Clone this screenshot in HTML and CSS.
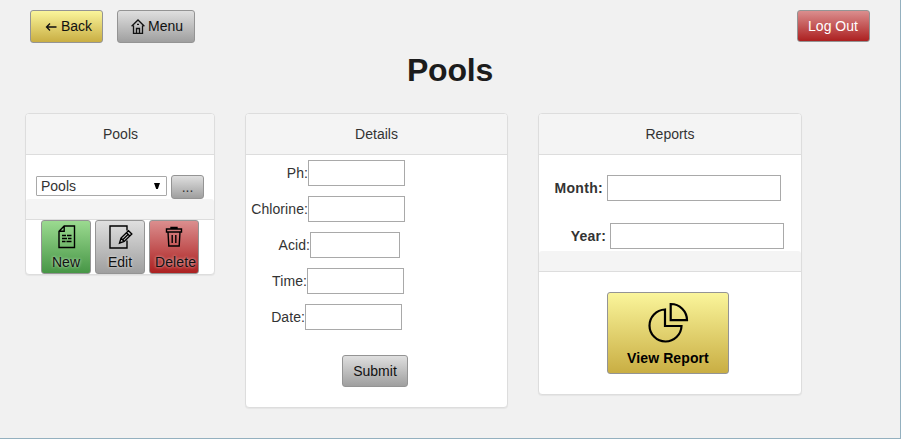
FILE: index.html
```html
<!DOCTYPE html>
<html lang="en">
<head>
<meta charset="utf-8">
<title>Pools</title>
<link rel="stylesheet" href="styles.css">
</head>
<body>
<div class="page">
  <nav class="topbar">
    <button class="btn yellow back"><svg width="12" height="10" viewBox="0 0 12 10"><path d="M11.5 5H1.5M5 1.500L1.500 5L5 8.500"/></svg>Back</button>
    <button class="btn gray menu"><svg width="14" height="15" viewBox="0 0 14 15"><path d="M.6 7.300L7 1l6.400 6.300M2.500 6.500v7.900h9V6.500M5.500 14V9.500h3V14M6 5.300h2"/></svg>Menu</button>
    <button class="btn red logout">Log Out</button>
  </nav>
  <h1>Pools</h1>
  <main class="panels">
    <section class="panel pools">
      <h2>Pools</h2>
      <div class="picker">
        <div class="select"><span>Pools</span><svg width="6" height="6" viewBox="0 0 6 6"><path d="M0 0h6L3.800 6H2.200z"/></svg></div>
        <button class="btn gray more">...</button>
      </div>
      <div class="divider"></div>
      <div class="actions">
        <button class="btn green tile"><svg class="shift" width="20" height="24" viewBox="0 0 20 24"><path d="M7.200 1H17.500v21.500H2V6.200zM7.200 1v5.200H2M5 10.500h4m1 0h4.500M5 13.500h5m1 0h3.500M5 16.500h3.500m1 0h5"/></svg>New</button>
        <button class="btn gray tile"><svg class="shift" width="24" height="24" viewBox="0 0 24 24"><path d="M18 5.500V1H1v22h17V15.500M10.500 18.200l1.500-5.200L19.500 5.800l3.300 3.300-7.600 7.300zM12 13l3.200 3.400M17.500 7.800l3.300 3.300M14 14.500l5-5"/></svg>Edit</button>
        <button class="btn red tile"><svg width="18" height="24" viewBox="0 0 18 24"><path d="M1.500 4h15v3h-15zM6 4V2.500h6V4M3 7l.8 14h10.400L15 7M7.200 10v8M10.800 10v8"/></svg><span class="wide">Delete</span></button>
      </div>
    </section>
    <section class="panel details">
      <h2>Details</h2>
      <form>
        <div class="field ph"><label for="ph">Ph:</label><input id="ph"></div>
        <div class="field chlorine"><label for="chlorine">Chlorine:</label><input id="chlorine"></div>
        <div class="field acid"><label for="acid">Acid:</label><input id="acid"></div>
        <div class="field time"><label for="time">Time:</label><input id="time"></div>
        <div class="field date"><label for="date">Date:</label><input id="date"></div>
        <button type="button" class="btn gray submit">Submit</button>
      </form>
    </section>
    <section class="panel reports">
      <h2>Reports</h2>
      <div class="field month"><label for="month">Month:</label><input id="month"></div>
      <div class="field year"><label for="year">Year:</label><input id="year"></div>
      <div class="divider"></div>
      <button class="btn yellow view"><svg width="42" height="42" viewBox="0 0 42 42"><path d="M18 7.500A16 16 0 1 0 34.500 24H18zM23.700 2v16.200H40A16.200 16.200 0 0 0 23.700 2z"/></svg>View Report</button>
    </section>
  </main>
</div>
</body>
</html>
```

FILE: styles.css
```css
* { box-sizing: border-box; }
body {
  margin: 0;
  font: 14px/20px "Liberation Sans", Arial, sans-serif;
  color: #333;
}
.page {
  width: 901px;
  height: 439px;
  background: #f1f1f1;
  border: solid #94b0bf;
  border-width: 0 1px 1px 0;
  overflow: hidden;
}
.topbar { display: flex; align-items: flex-start; padding: 10px 30px 0; height: 43px; }
.btn {
  display: flex;
  align-items: center;
  justify-content: center;
  flex: none;
  margin: 0;
  padding: 0;
  border: 1px solid #949494;
  border-radius: 3px;
  font: inherit;
  color: #111;
}
svg { flex: none; fill: none; stroke: #111; stroke-width: 1.3; }
.yellow { background: linear-gradient(#faf59b, #c9ae43); }
.gray { background: linear-gradient(#dfdfdf, #9f9f9f); }
.red { background: linear-gradient(#db8e8e, #ac2020); }
.green { background: linear-gradient(#9bda90, #479646); }
.back { width: 73px; height: 33px; gap: 4px; padding: 0 0 1px 4px; }
.back svg { margin-top: 2px; }
.menu { width: 78px; height: 33px; gap: 3px; margin-left: 14px; padding: 0 0 1px 2px; }
.menu svg { margin-top: 1px; }
.logout { width: 73px; height: 32px; margin-left: auto; padding-right: 1px; color: #fff; }
h1 {
  margin: 7px 0 23px;
  text-align: center;
  font-size: 32px;
  line-height: 40px;
  letter-spacing: -.2px;
  color: #1c1c1c;
}
.panels { display: flex; align-items: flex-start; gap: 30px; padding-left: 25px; }
.panel {
  border: 1px solid #ddd;
  border-radius: 4px;
  background: #fff;
  box-shadow: 0 1px 1px rgba(0, 0, 0, .05);
}
.panel h2 {
  margin: 0;
  height: 41px;
  border-bottom: 1px solid #ddd;
  border-radius: 3px 3px 0 0;
  background: #f4f4f4;
  font-size: 14px;
  line-height: 40px;
  font-weight: normal;
  text-align: center;
}
.pools h2 { padding-left: 1px; }
.divider { height: 21px; border-bottom: 1px solid #ddd; border-radius: 3px 3px 0 0; background: #f4f4f4; }
.pools { width: 190px; height: 162px; }
.picker { display: flex; align-items: flex-start; gap: 4px; height: 44px; padding: 20px 10px 0; }
.select {
  display: flex;
  align-items: center;
  justify-content: space-between;
  width: 131px;
  height: 20px;
  margin-top: 1px;
  padding: 0 6px 0 4px;
  border: 1px solid #a9a9a9;
  border-radius: 1px;
}
.select svg { fill: #000; stroke: none; }
.more { width: 33px; height: 24px; color: #333; }
.actions { display: flex; gap: 4px; padding-left: 15px; }
.tile { flex-direction: column; justify-content: flex-start; width: 50px; height: 54px; padding-top: 4px; gap: 3px; text-shadow: 0 0 3px rgba(255, 255, 255, .8); }
.tile svg { stroke: #000; stroke-width: 1.4; }
.tile .shift { margin-left: 2px; }
.wide { padding-left: 3px; letter-spacing: .1px; }
.details { width: 263px; height: 295px; }
.details form { padding-top: 5px; }
.field { display: flex; align-items: center; height: 26px; }
.field label { flex: none; text-align: right; }
.field input { width: 97px; height: 26px; margin: 0; padding: 0; border: 1px solid #a9a9a9; background: #fff; }
.details .field { margin-bottom: 10px; }
.details label { letter-spacing: .08px; }
.ph label, .chlorine label { width: 62px; }
.acid label { width: 64px; }
.acid input { width: 90px; }
.time label { width: 61px; }
.date label { width: 59px; }
.submit { width: 66px; height: 32px; margin: 25px 0 0 96px; }
.reports { width: 264px; height: 282px; }
.reports .field { font-weight: bold; }
.reports input { width: 174px; }
.month { margin: 20px 0 22px; }
.month label { width: 64px; margin-right: 4px; letter-spacing: .3px; }
.year { margin-bottom: 2px; }
.year label { width: 67px; margin-right: 4px; letter-spacing: .2px; }
.view { flex-direction: column; justify-content: flex-start; width: 122px; height: 82px; margin: 20px 0 0 68px; padding-top: 9px; gap: 4px; color: #000; font-weight: bold; letter-spacing: .1px; }
.view svg { stroke: #000; stroke-width: 2.2; }
```
